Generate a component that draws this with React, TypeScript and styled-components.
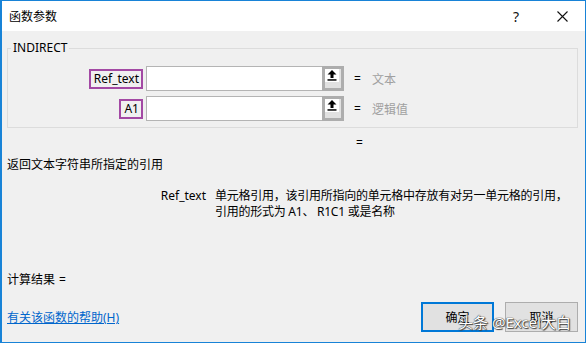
import React from "react";
import styled, { createGlobalStyle } from "styled-components";

const Global = createGlobalStyle`
  html, body { margin: 0; padding: 0; background: #fff; }
  body { font-family: "Noto Sans", "Noto Sans CJK SC", sans-serif; }
  * { box-sizing: border-box; }
`;

const FONT = `"Noto Sans", "Noto Sans CJK SC", sans-serif`;

const Window = styled.div`
  width: 586px;
  height: 343px;
  border: 1px solid #1883d7;
  border-left-width: 2px;
  background: #f0f0f0;
  display: flex;
  flex-direction: column;
  position: relative;
  font-family: ${FONT};
  font-size: 12px;
  color: #000;
  overflow: hidden;
`;

const TitleBar = styled.div`
  height: 30px;
  background: #fff;
  display: flex;
  align-items: center;
  padding-left: 7px;
`;

const Title = styled.div`
  flex: 1;
  font-size: 12px;
`;

const TitleButton = styled.div`
  width: 46px;
  height: 30px;
  display: flex;
  align-items: center;
  justify-content: center;
  font-size: 14px;
  color: #111;
`;

const Body = styled.div`
  flex: 1;
  display: flex;
  flex-direction: column;
  padding: 0 7px 0 5px;
`;

const Group = styled.fieldset`
  margin: 10px 0 0 0;
  padding: 11px 0 0 0;
  height: 87px;
  border: 1px solid #dcdcdc;
  display: flex;
  flex-direction: column;
  gap: 5px;
`;

const Legend = styled.legend`
  margin-left: 3px;
  padding: 0 2px;
  font-size: 12px;
  color: #000;
  line-height: 14px;
`;

const ArgRow = styled.div`
  display: grid;
  grid-template-columns: 138px 198px 28px 1fr;
  align-items: center;
  height: 25px;
`;

const LabelCell = styled.div`
  display: flex;
  justify-content: flex-end;
  padding-right: 3px;
`;

const ArgLabel = styled.div`
  border: 2px solid #a349a4;
  padding: 0 2px 0 3px;
  height: 20px;
  display: flex;
  align-items: center;
  font-size: 12px;
`;

const InputWrap = styled.div`
  display: flex;
  height: 25px;
`;

const Input = styled.div`
  flex: 1;
  background: #fff;
  border: 1px solid #b4b4b4;
  border-right: none;
`;

const RefButton = styled.div`
  width: 22px;
  height: 25px;
  border: 3px solid #adadad;
  background: #e1e1e1;
  display: flex;
  align-items: flex-start;
`;

const RefIcon = styled.div`
  width: 14px;
  height: 13px;
  background: #fff;
  display: flex;
  align-items: center;
  justify-content: center;
`;

const Eq = styled.div`
  padding-left: 10px;
  font-size: 12px;
`;

const Value = styled.div`
  color: #a0a0a0;
  font-size: 12px;
`;

const ResultEq = styled.div`
  height: 28px;
  padding-left: 349px;
  display: flex;
  align-items: center;
`;

const Desc = styled.div`
  height: 16px;
  display: flex;
  align-items: center;
`;

const ArgHelp = styled.div`
  margin-top: 16px;
  display: grid;
  grid-template-columns: 208px 1fr;
  line-height: 16px;
`;

const ArgHelpName = styled.div`
  text-align: right;
  padding-right: 9px;
`;

const ArgHelpText = styled.div`
  letter-spacing: -0.25px;
`;

const Result = styled.div`
  margin-top: 51px;
  height: 16px;
  display: flex;
  align-items: center;
  gap: 4px;
`;

const Footer = styled.div`
  margin-top: 15px;
  display: flex;
  align-items: center;
  height: 30px;
`;

const HelpLink = styled.a`
  flex: 1;
  color: #0066cc;
  text-decoration: underline;
  cursor: pointer;
`;

const Btn = styled.div<{ $primary?: boolean }>`
  width: 73px;
  height: 30px;
  margin-left: ${(p) => (p.$primary ? 0 : 11)}px;
  border: ${(p) => (p.$primary ? "2px solid #0078d7" : "1px solid #adadad")};
  background: #e1e1e1;
  display: flex;
  align-items: center;
  justify-content: center;
`;

const Watermark = styled.div`
  position: absolute;
  left: 456px;
  top: 311px;
  font-size: 15px;
  line-height: 20px;
  color: #fff;
  font-family: ${FONT};
  text-shadow: 0 0 1px #333, 0 0 1px #333, 1px 1px 1px #444;
  white-space: nowrap;
`;

const UpArrow = () => (
  <svg width="10" height="11" viewBox="0 0 10 11">
    <path d="M5 0 L9.5 4.5 L6.5 4.5 L6.5 8 L3.5 8 L3.5 4.5 L0.5 4.5 Z" fill="#000" />
    <rect x="0.5" y="9.2" width="9" height="1.5" fill="#000" />
  </svg>
);

const CloseIcon = () => (
  <svg width="11" height="11" viewBox="0 0 11 11">
    <path d="M0.5 0.5 L10.5 10.5 M10.5 0.5 L0.5 10.5" stroke="#111" strokeWidth="1.1" />
  </svg>
);

type Arg = { name: string; value: string };
const args: Arg[] = [
  { name: "Ref_text", value: "文本" },
  { name: "A1", value: "逻辑值" },
];

export default function App() {
  return (
    <>
      <Global />
      <Window>
        <TitleBar>
          <Title>函数参数</Title>
          <TitleButton>?</TitleButton>
          <TitleButton>
            <CloseIcon />
          </TitleButton>
        </TitleBar>
        <Body>
          <Group>
            <Legend>INDIRECT</Legend>
            {args.map((a) => (
              <ArgRow key={a.name}>
                <LabelCell>
                  <ArgLabel>{a.name}</ArgLabel>
                </LabelCell>
                <InputWrap>
                  <Input />
                  <RefButton>
                    <RefIcon>
                      <UpArrow />
                    </RefIcon>
                  </RefButton>
                </InputWrap>
                <Eq>=</Eq>
                <Value>{a.value}</Value>
              </ArgRow>
            ))}
          </Group>
          <ResultEq>=</ResultEq>
          <Desc>返回文本字符串所指定的引用</Desc>
          <ArgHelp>
            <ArgHelpName>Ref_text</ArgHelpName>
            <ArgHelpText>
              单元格引用，该引用所指向的单元格中存放有对另一单元格的引用，
              <br />
              引用的形式为 A1、 R1C1 或是名称
            </ArgHelpText>
          </ArgHelp>
          <Result>
            <span>计算结果</span>
            <span>=</span>
          </Result>
          <Footer>
            <HelpLink>有关该函数的帮助(H)</HelpLink>
            <Btn $primary>确定</Btn>
            <Btn>取消</Btn>
          </Footer>
        </Body>
        <Watermark>头条 @Excel大白</Watermark>
      </Window>
    </>
  );
}
